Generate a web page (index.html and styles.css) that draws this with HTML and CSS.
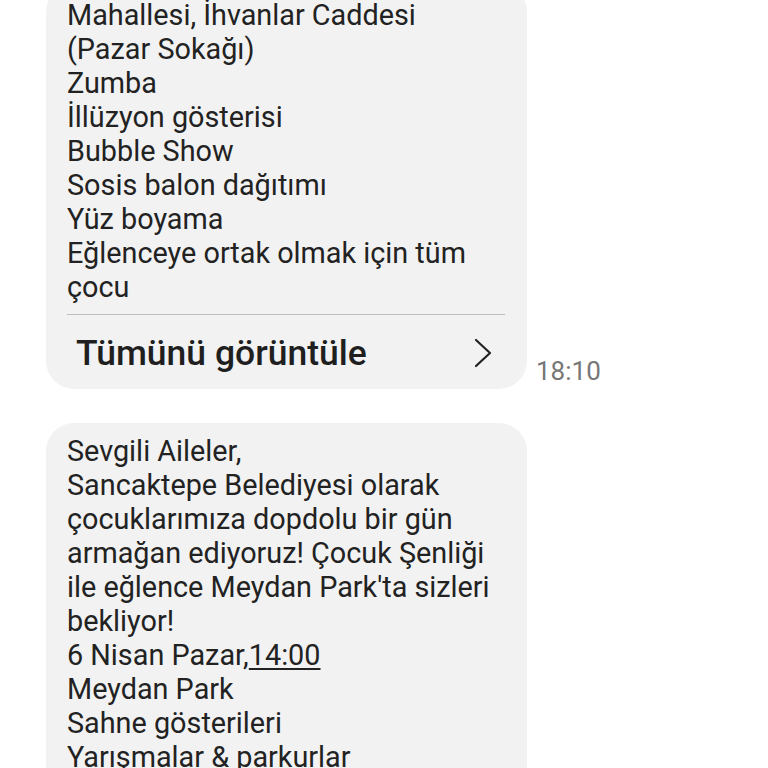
FILE: index.html
```html
<!DOCTYPE html>
<html lang="tr">
<head>
<meta charset="utf-8">
<link rel="stylesheet" href="styles.css">
</head>
<body>
<div class="thread">
  <div class="row">
    <div class="bubble first">
      <div class="text">
        <div>Mahallesi, İhvanlar Caddesi</div>
        <div>(Pazar Sokağı)</div>
        <div>Zumba</div>
        <div>İllüzyon gösterisi</div>
        <div>Bubble Show</div>
        <div>Sosis balon dağıtımı</div>
        <div>Yüz boyama</div>
        <div>Eğlenceye ortak olmak için tüm</div>
        <div>çocu</div>
      </div>
      <div class="divider"></div>
      <div class="more">
        <span class="more-label">Tümünü görüntüle</span>
        <svg class="chev" width="20" height="30" viewBox="0 0 20 30"><path d="M3 2 L17 15 L3 28" fill="none" stroke="#222" stroke-width="2.2" stroke-linecap="round" stroke-linejoin="round"/></svg>
      </div>
    </div>
    <span class="time">18:10</span>
  </div>
  <div class="row">
    <div class="bubble second">
      <div class="text">
        <div>Sevgili Aileler,</div>
        <div>Sancaktepe Belediyesi olarak</div>
        <div>çocuklarımıza dopdolu bir gün</div>
        <div>armağan ediyoruz! Çocuk Şenliği</div>
        <div>ile eğlence Meydan Park'ta sizleri</div>
        <div>bekliyor!</div>
        <div>6 Nisan Pazar,<span class="u">14:00</span></div>
        <div>Meydan Park</div>
        <div>Sahne gösterileri</div>
        <div>Yarışmalar &amp; parkurlar</div>
      </div>
    </div>
  </div>
</div>
</body>
</html>
```
FILE: styles.css
```css
html, body {
  margin: 0;
  padding: 0;
  background: #ffffff;
  width: 768px;
  height: 768px;
  overflow: hidden;
}
body {
  font-family: Roboto, "Noto Sans", sans-serif;
  color: #222222;
}
.thread {
  display: flex;
  flex-direction: column;
  gap: 34px;
  margin-top: -16px;
  padding-left: 46px;
}
.row {
  display: flex;
  align-items: flex-end;
  gap: 9px;
}
.bubble {
  width: 481px;
  box-sizing: border-box;
  background: #f2f2f2;
  border-radius: 28px;
  padding: 14px 22px 0 21px;
}
.second {
  padding-top: 11px;
  padding-bottom: 20px;
}
.text {
  font-size: 28.8px;
  line-height: 34px;
  white-space: nowrap;
}
.u {
  text-decoration: underline;
  text-decoration-thickness: 1.5px;
  text-underline-offset: 3px;
}
.divider {
  height: 1px;
  background: #bdbdbd;
  margin-top: 10px;
}
.more {
  height: 74px;
  display: flex;
  align-items: center;
  justify-content: space-between;
  padding: 2px 12px 0 9px;
  box-sizing: border-box;
}
.more-label {
  font-size: 35.5px;
  font-weight: 500;
  color: #1f1f1f;
}
.chev {
  display: block;
}
.time {
  font-size: 26px;
  color: #777777;
  line-height: 1;
  margin-bottom: 5px;
}
```
